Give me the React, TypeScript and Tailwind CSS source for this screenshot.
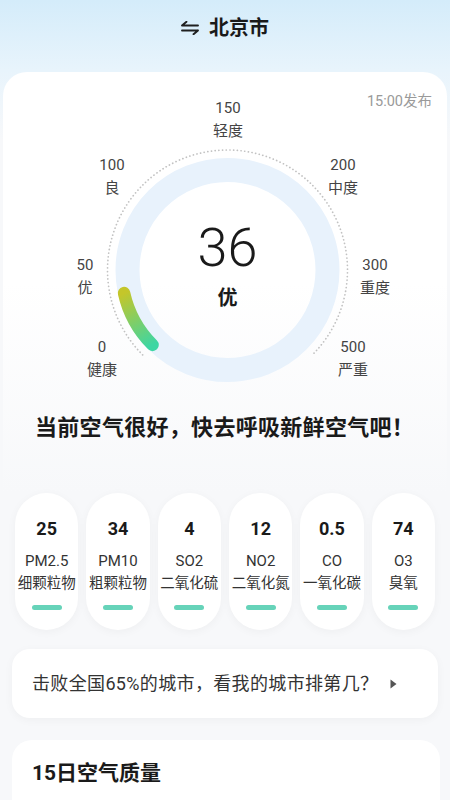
import React from "react";

const CX = 224.5;
const CY = 198;

function pt(r: number, deg: number) {
  const a = (deg * Math.PI) / 180;
  return { x: CX + r * Math.sin(a), y: CY - r * Math.cos(a) };
}

function Gauge() {
  const d0 = pt(120, -135);
  const d1 = pt(120, 135);
  const g0 = pt(106, -135);
  const g1 = pt(106, -135 + (36 / 50) * 45);
  const labels = [
    { n: "150", t: "轻度", x: 225, y: 24.5 },
    { n: "100", t: "良", x: 109, y: 81.5 },
    { n: "200", t: "中度", x: 340, y: 81.5 },
    { n: "50", t: "优", x: 82, y: 181.5 },
    { n: "300", t: "重度", x: 372, y: 181.5 },
    { n: "0", t: "健康", x: 99, y: 263.5 },
    { n: "500", t: "严重", x: 350, y: 263.5 },
  ];
  return (
    <div className="relative h-[338px] w-full">
      <svg className="absolute left-0 top-0" width="444" height="338" viewBox="0 0 444 338">
        <defs>
          <linearGradient id="gg" gradientUnits="userSpaceOnUse" x1={g0.x} y1={g0.y} x2={g1.x} y2={g1.y}>
            <stop offset="0" stopColor="#3dd6a3" />
            <stop offset="1" stopColor="#c4c62a" />
          </linearGradient>
        </defs>
        <path
          d={`M${d0.x} ${d0.y} A120 120 0 1 1 ${d1.x} ${d1.y}`}
          fill="none"
          stroke="#c2c2c2"
          strokeWidth="1.7"
          strokeLinecap="round"
          strokeDasharray="0.1 3.6"
        />
        <circle cx={CX} cy={CY} r="100" fill="none" stroke="#e8f2fc" strokeWidth="24" />
        <path
          d={`M${g0.x} ${g0.y} A106 106 0 0 1 ${g1.x} ${g1.y}`}
          fill="none"
          stroke="url(#gg)"
          strokeWidth="12.5"
          strokeLinecap="round"
        />
      </svg>
      {labels.map((l) => (
        <div
          key={l.n}
          className="absolute flex -translate-x-1/2 flex-col items-center text-[15px] leading-[23px] text-[#444]"
          style={{ left: l.x, top: l.y }}
        >
          <span>{l.n}</span>
          <span>{l.t}</span>
        </div>
      ))}
      <div className="absolute right-[15px] top-[20px] text-[14.5px] leading-[20px] text-[#9a9a9a]">15:00发布</div>
      <div className="absolute left-0 top-[148.5px] flex w-[449px] flex-col items-center">
        <span className="text-[54px] font-light leading-[54px] text-[#1a1a1a]">36</span>
        <span className="mt-[11.5px] text-[20px] font-bold leading-[24px] text-[#1a1a1a]">优</span>
      </div>
    </div>
  );
}

const items = [
  { v: "25", n: "PM2.5", c: "细颗粒物" },
  { v: "34", n: "PM10", c: "粗颗粒物" },
  { v: "4", n: "SO2", c: "二氧化硫" },
  { v: "12", n: "NO2", c: "二氧化氮" },
  { v: "0.5", n: "CO", c: "一氧化碳" },
  { v: "74", n: "O3", c: "臭氧" },
];

export default function App() {
  return (
    <div className="relative min-h-[800px] w-full overflow-hidden bg-[#f7f8fa] font-[family-name:Roboto,'Noto_Sans_CJK_SC',sans-serif]">
      <div className="absolute left-0 top-0 h-[140px] w-full bg-gradient-to-b from-[#d4ecfa] via-[#e8f4fc] to-[#f7f8fa]" />
      <div className="relative">
        <div className="flex h-[56px] items-center justify-center gap-[10px]">
          <svg width="18" height="14" viewBox="0 0 18 14">
            <path d="M1 4.5H17M1 4.5L5.5 0.8M1 9.5H17M17 9.5L12.5 13.2" fill="none" stroke="#1f1f1f" strokeWidth="1.9" strokeLinecap="round" strokeLinejoin="round" />
          </svg>
          <span className="text-[20px] font-bold leading-[28px] text-[#1a1a1a]">北京市</span>
        </div>
        <div className="mx-[3px] mt-[16px] rounded-t-[24px] bg-gradient-to-b from-white via-white to-[#f7f8fa] pb-[47px]">
          <Gauge />
          <div className="pl-[32px] text-[22px] font-bold leading-[36px] tracking-[0.3px] text-[#1a1a1a]">当前空气很好，快去呼吸新鲜空气吧！</div>
        </div>
        <div className="grid grid-cols-6 gap-[8px] px-[15px]">
          {items.map((it) => (
            <div
              key={it.n}
              className="flex h-[137px] flex-col items-center rounded-full bg-white pt-[24px] shadow-[0_2px_10px_rgba(0,0,0,0.04)]"
            >
              <span className="text-[18px] font-bold leading-[24px] text-[#1a1a1a]">{it.v}</span>
              <span className="mt-[10px] text-[15px] leading-[20px] text-[#333]">{it.n}</span>
              <span className="mt-[2px] whitespace-nowrap text-[14.5px] leading-[22px] text-[#333]">{it.c}</span>
              <span className="mt-[10px] h-[5px] w-[30px] rounded-full bg-[#66d3b9]" />
            </div>
          ))}
        </div>
        <div className="mx-[12px] mt-[19px] flex h-[69px] items-center gap-[12px] rounded-[18px] bg-white pl-[20px] shadow-[0_2px_10px_rgba(0,0,0,0.04)]">
          <span className="text-[18px] leading-[24px] tracking-[0.35px] text-[#333]">击败全国65%的城市，看我的城市排第几？</span>
          <svg width="7" height="10" viewBox="0 0 7 10">
            <path d="M0.5 0.5L6.5 5L0.5 9.5Z" fill="#555" />
          </svg>
        </div>
        <div className="ml-[12px] mr-[10px] mt-[22px] h-[80px] rounded-t-[20px] bg-white pl-[20px] pt-[18px]">
          <span className="text-[21px] font-bold leading-[30px] text-[#1a1a1a]">15日空气质量</span>
        </div>
      </div>
    </div>
  );
}
